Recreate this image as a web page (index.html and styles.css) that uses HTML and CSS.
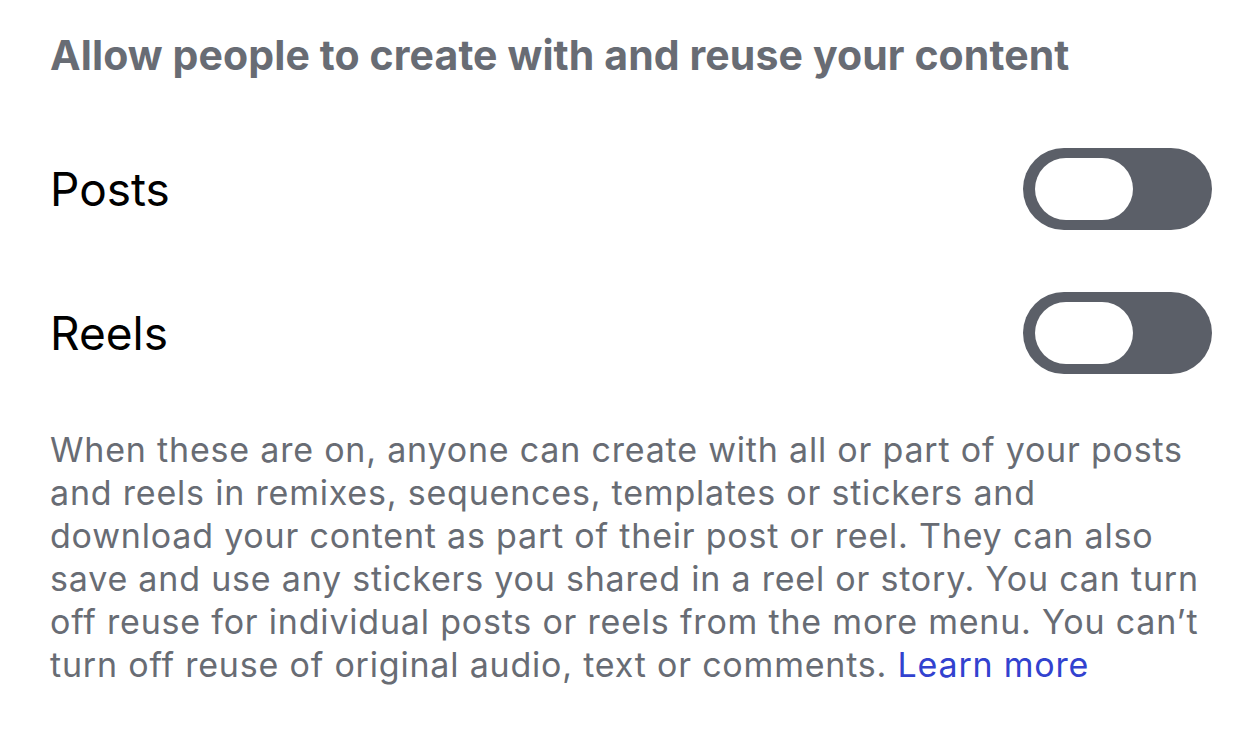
FILE: index.html
```html
<!DOCTYPE html>
<html>
<head>
<meta charset="utf-8">
<link rel="stylesheet" href="styles.css">
</head>
<body>
<div class="page">
  <h1 class="title">Allow people to create with and reuse your content</h1>
  <div class="row row-posts">
    <span class="label">Posts</span>
    <div class="toggle"><div class="knob"></div></div>
  </div>
  <div class="row row-reels">
    <span class="label">Reels</span>
    <div class="toggle"><div class="knob"></div></div>
  </div>
  <p class="desc">When these are on, anyone can create with all or part of your posts and reels in remixes, sequences, templates or stickers and download your content as part of their post or reel. They can also save and use any stickers you shared in a reel or story. You can turn off reuse for individual posts or reels from the more menu. You can’t turn off reuse of original audio, text or comments. <a class="link" href="#">Learn more</a></p>
</div>
</body>
</html>
```

FILE: styles.css
```css
html, body {
  margin: 0;
  padding: 0;
  background: #ffffff;
}
.page {
  font-family: Inter, "Noto Sans", sans-serif;
  padding: 28px 40px 0 50px;
  width: 1260px;
  box-sizing: border-box;
}
.title {
  margin: 0;
  font-size: 41px;
  font-weight: 700;
  color: #686c74;
  line-height: 54px;
  letter-spacing: 0.1px;
}
.row {
  display: flex;
  align-items: center;
  justify-content: space-between;
  height: 82px;
  padding-right: 8px;
}
.row-posts {
  margin-top: 66px;
}
.row-reels {
  margin-top: 62px;
}
.label {
  font-size: 46px;
  color: #000;
}
.toggle {
  width: 189px;
  height: 82px;
  border-radius: 41px;
  background: #5b5f68;
  display: flex;
  align-items: center;
  padding-left: 12px;
  box-sizing: border-box;
}
.knob {
  width: 98px;
  height: 62px;
  border-radius: 31px;
  background: #fff;
}
.desc {
  margin: 54px 0 0;
  max-width: 1156px;
  font-size: 34px;
  line-height: 43px;
  letter-spacing: 0.8px;
  color: #686c74;
}
.link {
  color: #3242cf;
  text-decoration: none;
}
```
